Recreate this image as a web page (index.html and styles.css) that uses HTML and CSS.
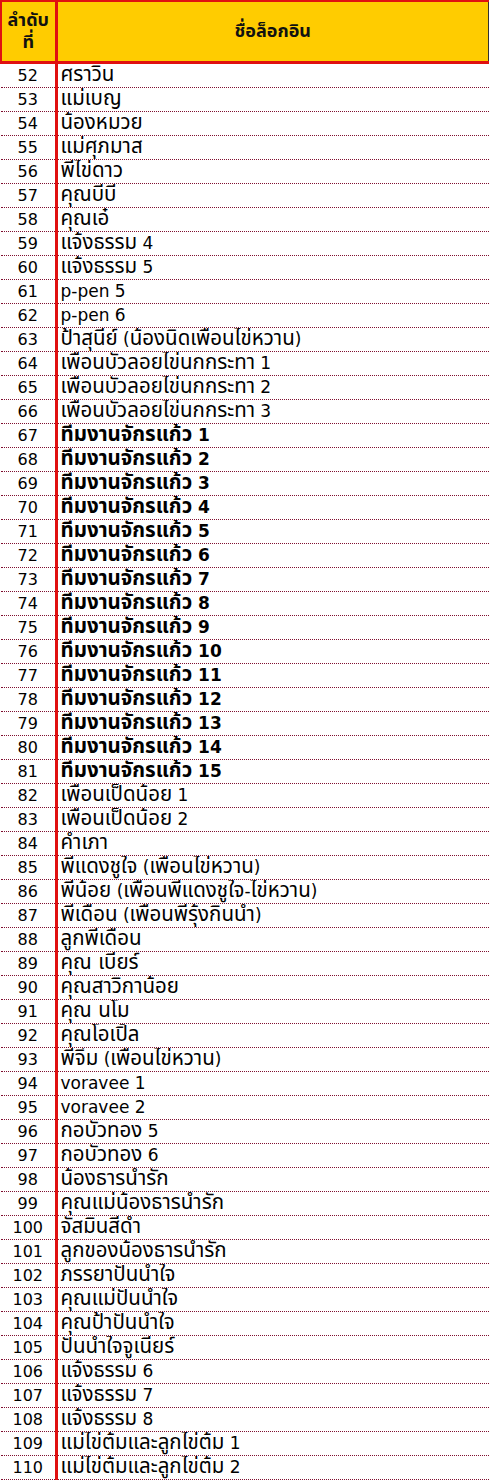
FILE: index.html
```html
<!DOCTYPE html>
<html lang="th">
<head>
<meta charset="utf-8">
<title>ชื่อล็อกอิน</title>
<link rel="stylesheet" href="styles.css">
</head>
<body>
<table class="sheet">
  <colgroup><col class="c-num"><col class="c-name"></colgroup>
  <thead>
    <tr><th class="h-num"><span class="th">ลำดับ</span><br><span class="th">ที่</span></th><th class="h-name"><span class="th">ชื่อล็อกอิน</span></th></tr>
  </thead>
  <tbody>
    <tr><td class="num">52</td><td class="name"><span class="th">ศราวิน</span></td></tr>
    <tr><td class="num">53</td><td class="name"><span class="th">แม่เบญ</span></td></tr>
    <tr><td class="num">54</td><td class="name"><span class="th">น้องหมวย</span></td></tr>
    <tr><td class="num">55</td><td class="name"><span class="th">แม่ศุภมาส</span></td></tr>
    <tr><td class="num">56</td><td class="name"><span class="th">พี่ไข่ดาว</span></td></tr>
    <tr><td class="num">57</td><td class="name"><span class="th">คุณบีบี</span></td></tr>
    <tr><td class="num">58</td><td class="name"><span class="th">คุณเอ๋</span></td></tr>
    <tr><td class="num">59</td><td class="name"><span class="th">แจ้งธรรม</span> 4</td></tr>
    <tr><td class="num">60</td><td class="name"><span class="th">แจ้งธรรม</span> 5</td></tr>
    <tr><td class="num">61</td><td class="name">p-pen 5</td></tr>
    <tr><td class="num">62</td><td class="name">p-pen 6</td></tr>
    <tr><td class="num">63</td><td class="name"><span class="th">ป้าสุนีย์</span> (<span class="th">น้องนิดเพื่อนไข่หวาน</span>)</td></tr>
    <tr><td class="num">64</td><td class="name"><span class="th">เพื่อนบัวลอยไข่นกกระทา</span> 1</td></tr>
    <tr><td class="num">65</td><td class="name"><span class="th">เพื่อนบัวลอยไข่นกกระทา</span> 2</td></tr>
    <tr><td class="num">66</td><td class="name"><span class="th">เพื่อนบัวลอยไข่นกกระทา</span> 3</td></tr>
    <tr><td class="num">67</td><td class="name bold"><span class="th">ทีมงานจักรแก้ว</span> 1</td></tr>
    <tr><td class="num">68</td><td class="name bold"><span class="th">ทีมงานจักรแก้ว</span> 2</td></tr>
    <tr><td class="num">69</td><td class="name bold"><span class="th">ทีมงานจักรแก้ว</span> 3</td></tr>
    <tr><td class="num">70</td><td class="name bold"><span class="th">ทีมงานจักรแก้ว</span> 4</td></tr>
    <tr><td class="num">71</td><td class="name bold"><span class="th">ทีมงานจักรแก้ว</span> 5</td></tr>
    <tr><td class="num">72</td><td class="name bold"><span class="th">ทีมงานจักรแก้ว</span> 6</td></tr>
    <tr><td class="num">73</td><td class="name bold"><span class="th">ทีมงานจักรแก้ว</span> 7</td></tr>
    <tr><td class="num">74</td><td class="name bold"><span class="th">ทีมงานจักรแก้ว</span> 8</td></tr>
    <tr><td class="num">75</td><td class="name bold"><span class="th">ทีมงานจักรแก้ว</span> 9</td></tr>
    <tr><td class="num">76</td><td class="name bold"><span class="th">ทีมงานจักรแก้ว</span> 10</td></tr>
    <tr><td class="num">77</td><td class="name bold"><span class="th">ทีมงานจักรแก้ว</span> 11</td></tr>
    <tr><td class="num">78</td><td class="name bold"><span class="th">ทีมงานจักรแก้ว</span> 12</td></tr>
    <tr><td class="num">79</td><td class="name bold"><span class="th">ทีมงานจักรแก้ว</span> 13</td></tr>
    <tr><td class="num">80</td><td class="name bold"><span class="th">ทีมงานจักรแก้ว</span> 14</td></tr>
    <tr><td class="num">81</td><td class="name bold"><span class="th">ทีมงานจักรแก้ว</span> 15</td></tr>
    <tr><td class="num">82</td><td class="name"><span class="th">เพื่อนเป็ดน้อย</span> 1</td></tr>
    <tr><td class="num">83</td><td class="name"><span class="th">เพื่อนเป็ดน้อย</span> 2</td></tr>
    <tr><td class="num">84</td><td class="name"><span class="th">คำเภา</span></td></tr>
    <tr><td class="num">85</td><td class="name"><span class="th">พี่แดงชูใจ</span> (<span class="th">เพื่อนไข่หวาน</span>)</td></tr>
    <tr><td class="num">86</td><td class="name"><span class="th">พี่น้อย</span> (<span class="th">เพื่อนพี่แดงชูใจ</span>-<span class="th">ไข่หวาน</span>)</td></tr>
    <tr><td class="num">87</td><td class="name"><span class="th">พี่เดือน</span> (<span class="th">เพื่อนพี่รุ้งกินน้ำ</span>)</td></tr>
    <tr><td class="num">88</td><td class="name"><span class="th">ลูกพี่เดือน</span></td></tr>
    <tr><td class="num">89</td><td class="name"><span class="th">คุณ เบียร์</span></td></tr>
    <tr><td class="num">90</td><td class="name"><span class="th">คุณสาวิกาน้อย</span></td></tr>
    <tr><td class="num">91</td><td class="name"><span class="th">คุณ นโม</span></td></tr>
    <tr><td class="num">92</td><td class="name"><span class="th">คุณโอเปิ้ล</span></td></tr>
    <tr><td class="num">93</td><td class="name"><span class="th">พี่จิ๋ม</span> (<span class="th">เพื่อนไข่หวาน</span>)</td></tr>
    <tr><td class="num">94</td><td class="name">voravee 1</td></tr>
    <tr><td class="num">95</td><td class="name">voravee 2</td></tr>
    <tr><td class="num">96</td><td class="name"><span class="th">กอบัวทอง</span> 5</td></tr>
    <tr><td class="num">97</td><td class="name"><span class="th">กอบัวทอง</span> 6</td></tr>
    <tr><td class="num">98</td><td class="name"><span class="th">น้องธารน้ำรัก</span></td></tr>
    <tr><td class="num">99</td><td class="name"><span class="th">คุณแม่น้องธารน้ำรัก</span></td></tr>
    <tr><td class="num">100</td><td class="name"><span class="th">จัสมินสีดำ</span></td></tr>
    <tr><td class="num">101</td><td class="name"><span class="th">ลูกของน้องธารน้ำรัก</span></td></tr>
    <tr><td class="num">102</td><td class="name"><span class="th">ภรรยาปันน้ำใจ</span></td></tr>
    <tr><td class="num">103</td><td class="name"><span class="th">คุณแม่ปันน้ำใจ</span></td></tr>
    <tr><td class="num">104</td><td class="name"><span class="th">คุณป้าปันน้ำใจ</span></td></tr>
    <tr><td class="num">105</td><td class="name"><span class="th">ปันน้ำใจจูเนียร์</span></td></tr>
    <tr><td class="num">106</td><td class="name"><span class="th">แจ้งธรรม</span> 6</td></tr>
    <tr><td class="num">107</td><td class="name"><span class="th">แจ้งธรรม</span> 7</td></tr>
    <tr><td class="num">108</td><td class="name"><span class="th">แจ้งธรรม</span> 8</td></tr>
    <tr><td class="num">109</td><td class="name"><span class="th">แม่ไข่ต้มและลูกไข่ต้ม</span> 1</td></tr>
    <tr><td class="num">110</td><td class="name"><span class="th">แม่ไข่ต้มและลูกไข่ต้ม</span> 2</td></tr>
  </tbody>
</table>
</body>
</html>
```

FILE: styles.css
```css
html, body {
  margin: 0;
  padding: 0;
  background: #ffffff;
}

.sheet {
  border-collapse: collapse;
  table-layout: fixed;
  width: 489px;
  font-family: "DejaVu Sans", "Noto Sans Thai", "Noto Sans", sans-serif;
  font-size: 16px;
  color: #000000;
}

.c-num { width: 55px; }

.th {
  font-size: 20.5px;
  line-height: 1;
}

.sheet th {
  background: #ffcc00;
  height: 59px;
  padding: 0;
  font-weight: bold;
  font-size: 16px;
  line-height: 22px;
  text-align: center;
  vertical-align: middle;
  color: #111111;
  border-top: 2px solid #e01010;
  border-bottom: 3px solid #e01010;
}

.sheet th .th {
  font-size: 18px;
}

.h-num {
  border-left: 2px solid #e01010;
  border-right: 3px solid #e01010;
}

.h-name {
  border-right: 1px solid #333333;
}

.sheet td {
  height: 23px;
  padding: 0;
  line-height: 23px;
  white-space: nowrap;
  overflow: hidden;
  border-bottom: 1px dotted #801030;
}

.num {
  text-align: center;
  border-right: 3px solid #e01010;
}

.name {
  padding-left: 3px !important;
  text-align: left;
  font-size: 17px;
}

.bold {
  font-weight: bold;
}
```
